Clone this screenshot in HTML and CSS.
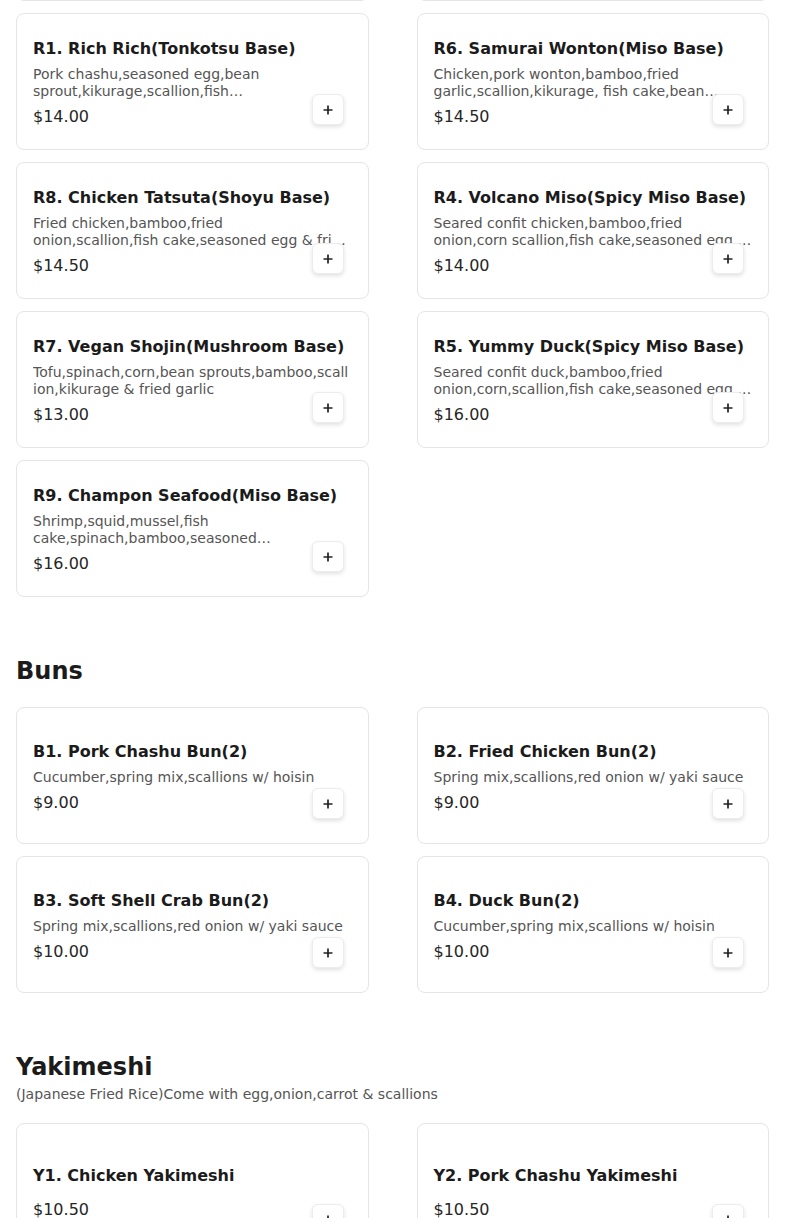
FILE: index.html
```html
<!DOCTYPE html>
<html lang="en">
<head>
<meta charset="utf-8">
<title>Menu</title>
<link rel="stylesheet" href="styles.css">
</head>
<body>
<main class="page">
  <section class="section section-first">
    <div class="grid">
      <div class="card">
        <h3 class="item-name">R2. Spicy Tonkotsu(Tonkotsu Base)</h3>
        <div class="item-desc">Pork chashu,seasoned egg,bean sprout,kikurage,scallion & chili oil</div>
        <div class="item-price">$14.50</div>
        <button class="add-btn" aria-label="Add"><svg viewBox="0 0 10 10" width="10" height="10"><path d="M5 0.5V9.5M0.5 5H9.5" stroke="#222" stroke-width="1.7" fill="none"/></svg></button>
      </div>
      <div class="card">
        <h3 class="item-name">R3. Shoyu Classic(Shoyu Base)</h3>
        <div class="item-desc">Pork chashu,bamboo,scallion,fish cake,seasoned egg & nori</div>
        <div class="item-price">$14.00</div>
        <button class="add-btn" aria-label="Add"><svg viewBox="0 0 10 10" width="10" height="10"><path d="M5 0.5V9.5M0.5 5H9.5" stroke="#222" stroke-width="1.7" fill="none"/></svg></button>
      </div>
      <div class="card">
        <h3 class="item-name">R1. Rich Rich(Tonkotsu Base)</h3>
        <div class="item-desc">Pork chashu,seasoned egg,bean sprout,kikurage,scallion,fish cake,bamboo,fried garlic &amp; sesame</div>
        <div class="item-price">$14.00</div>
        <button class="add-btn" aria-label="Add"><svg viewBox="0 0 10 10" width="10" height="10"><path d="M5 0.5V9.5M0.5 5H9.5" stroke="#222" stroke-width="1.7" fill="none"/></svg></button>
      </div>
      <div class="card">
        <h3 class="item-name">R6. Samurai Wonton(Miso Base)</h3>
        <div class="item-desc">Chicken,pork wonton,bamboo,fried garlic,scallion,kikurage, fish cake,bean sprout &amp; seasoned egg</div>
        <div class="item-price">$14.50</div>
        <button class="add-btn" aria-label="Add"><svg viewBox="0 0 10 10" width="10" height="10"><path d="M5 0.5V9.5M0.5 5H9.5" stroke="#222" stroke-width="1.7" fill="none"/></svg></button>
      </div>
      <div class="card">
        <h3 class="item-name">R8. Chicken Tatsuta(Shoyu Base)</h3>
        <div class="item-desc">Fried chicken,bamboo,fried onion,scallion,fish cake,seasoned egg &amp; fried garlic</div>
        <div class="item-price">$14.50</div>
        <button class="add-btn" aria-label="Add"><svg viewBox="0 0 10 10" width="10" height="10"><path d="M5 0.5V9.5M0.5 5H9.5" stroke="#222" stroke-width="1.7" fill="none"/></svg></button>
      </div>
      <div class="card">
        <h3 class="item-name">R4. Volcano Miso(Spicy Miso Base)</h3>
        <div class="item-desc">Seared confit chicken,bamboo,fried onion,corn scallion,fish cake,seasoned egg &amp; fried garlic</div>
        <div class="item-price">$14.00</div>
        <button class="add-btn" aria-label="Add"><svg viewBox="0 0 10 10" width="10" height="10"><path d="M5 0.5V9.5M0.5 5H9.5" stroke="#222" stroke-width="1.7" fill="none"/></svg></button>
      </div>
      <div class="card">
        <h3 class="item-name">R7. Vegan Shojin(Mushroom Base)</h3>
        <div class="item-desc">Tofu,spinach,corn,bean sprouts,bamboo,scall<wbr>ion,kikurage &amp; fried garlic</div>
        <div class="item-price">$13.00</div>
        <button class="add-btn" aria-label="Add"><svg viewBox="0 0 10 10" width="10" height="10"><path d="M5 0.5V9.5M0.5 5H9.5" stroke="#222" stroke-width="1.7" fill="none"/></svg></button>
      </div>
      <div class="card">
        <h3 class="item-name">R5. Yummy Duck(Spicy Miso Base)</h3>
        <div class="item-desc">Seared confit duck,bamboo,fried onion,corn,scallion,fish cake,seasoned egg &amp; fried garlic</div>
        <div class="item-price">$16.00</div>
        <button class="add-btn" aria-label="Add"><svg viewBox="0 0 10 10" width="10" height="10"><path d="M5 0.5V9.5M0.5 5H9.5" stroke="#222" stroke-width="1.7" fill="none"/></svg></button>
      </div>
      <div class="card">
        <h3 class="item-name">R9. Champon Seafood(Miso Base)</h3>
        <div class="item-desc">Shrimp,squid,mussel,fish cake,spinach,bamboo,seasoned egg,corn,scallion,kikurage &amp; fried garlic</div>
        <div class="item-price">$16.00</div>
        <button class="add-btn" aria-label="Add"><svg viewBox="0 0 10 10" width="10" height="10"><path d="M5 0.5V9.5M0.5 5H9.5" stroke="#222" stroke-width="1.7" fill="none"/></svg></button>
      </div>
    </div>
  </section>

  <section class="section">
    <div class="section-head">
      <h2 class="section-title">Buns</h2>
    </div>
    <div class="grid">
      <div class="card">
        <h3 class="item-name">B1. Pork Chashu Bun(2)</h3>
        <div class="item-desc">Cucumber,spring mix,scallions w/ hoisin</div>
        <div class="item-price">$9.00</div>
        <button class="add-btn" aria-label="Add"><svg viewBox="0 0 10 10" width="10" height="10"><path d="M5 0.5V9.5M0.5 5H9.5" stroke="#222" stroke-width="1.7" fill="none"/></svg></button>
      </div>
      <div class="card">
        <h3 class="item-name">B2. Fried Chicken Bun(2)</h3>
        <div class="item-desc">Spring mix,scallions,red onion w/ yaki sauce</div>
        <div class="item-price">$9.00</div>
        <button class="add-btn" aria-label="Add"><svg viewBox="0 0 10 10" width="10" height="10"><path d="M5 0.5V9.5M0.5 5H9.5" stroke="#222" stroke-width="1.7" fill="none"/></svg></button>
      </div>
      <div class="card">
        <h3 class="item-name">B3. Soft Shell Crab Bun(2)</h3>
        <div class="item-desc">Spring mix,scallions,red onion w/ yaki sauce</div>
        <div class="item-price">$10.00</div>
        <button class="add-btn" aria-label="Add"><svg viewBox="0 0 10 10" width="10" height="10"><path d="M5 0.5V9.5M0.5 5H9.5" stroke="#222" stroke-width="1.7" fill="none"/></svg></button>
      </div>
      <div class="card">
        <h3 class="item-name">B4. Duck Bun(2)</h3>
        <div class="item-desc">Cucumber,spring mix,scallions w/ hoisin</div>
        <div class="item-price">$10.00</div>
        <button class="add-btn" aria-label="Add"><svg viewBox="0 0 10 10" width="10" height="10"><path d="M5 0.5V9.5M0.5 5H9.5" stroke="#222" stroke-width="1.7" fill="none"/></svg></button>
      </div>
    </div>
  </section>

  <section class="section">
    <div class="section-head">
      <h2 class="section-title">Yakimeshi</h2>
      <p class="section-sub">(Japanese Fried Rice)Come with egg,onion,carrot &amp; scallions</p>
    </div>
    <div class="grid">
      <div class="card">
        <h3 class="item-name">Y1. Chicken Yakimeshi</h3>
        <div class="item-desc"></div>
        <div class="item-price">$10.50</div>
        <button class="add-btn" aria-label="Add"><svg viewBox="0 0 10 10" width="10" height="10"><path d="M5 0.5V9.5M0.5 5H9.5" stroke="#222" stroke-width="1.7" fill="none"/></svg></button>
      </div>
      <div class="card">
        <h3 class="item-name">Y2. Pork Chashu Yakimeshi</h3>
        <div class="item-desc"></div>
        <div class="item-price">$10.50</div>
        <button class="add-btn" aria-label="Add"><svg viewBox="0 0 10 10" width="10" height="10"><path d="M5 0.5V9.5M0.5 5H9.5" stroke="#222" stroke-width="1.7" fill="none"/></svg></button>
      </div>
    </div>
  </section>
</main>
</body>
</html>
```

FILE: styles.css
```css
html, body {
  margin: 0;
  padding: 0;
  background: #ffffff;
}

body {
  font-family: "DejaVu Sans", "Noto Sans", sans-serif;
  color: #1b1b1b;
}

.page {
  display: flex;
  flex-direction: column;
  gap: 58px;
  padding: 0 16px 40px;
  margin-top: -136px;
}

.section-head {
  margin-bottom: 20px;
}

.section-title {
  margin: 0;
  font-size: 24px;
  line-height: 32px;
  font-weight: bold;
  color: #1b1b1b;
}

.section-sub {
  margin: 2px 0 0;
  font-size: 14px;
  line-height: 18px;
  color: #555555;
}

.grid {
  display: grid;
  grid-template-columns: 1fr 1fr;
  column-gap: 48px;
  row-gap: 12px;
}

.card {
  position: relative;
  box-sizing: border-box;
  height: 137px;
  border: 1px solid #e5e5e5;
  border-radius: 8px;
  background: #ffffff;
  padding: 3px 16px 0;
  display: flex;
  flex-direction: column;
  justify-content: center;
  gap: 5px;
}

.item-name {
  margin: 0;
  font-size: 16px;
  line-height: 24px;
  font-weight: bold;
  color: #1b1b1b;
}

.item-desc {
  font-size: 14px;
  line-height: 17px;
  color: #555555;
  display: -webkit-box;
  -webkit-line-clamp: 2;
  -webkit-box-orient: vertical;
  overflow: hidden;
}

.item-price {
  font-size: 16px;
  line-height: 24px;
  color: #262626;
}

.add-btn {
  position: absolute;
  right: 24px;
  bottom: 24px;
  width: 32px;
  height: 31px;
  padding: 0;
  border: 1px solid #ececec;
  border-radius: 6px;
  background: #ffffff;
  box-shadow: 0 2px 4px rgba(0, 0, 0, 0.12);
  display: flex;
  align-items: center;
  justify-content: center;
  cursor: pointer;
}

.add-btn svg {
  display: block;
}
```
